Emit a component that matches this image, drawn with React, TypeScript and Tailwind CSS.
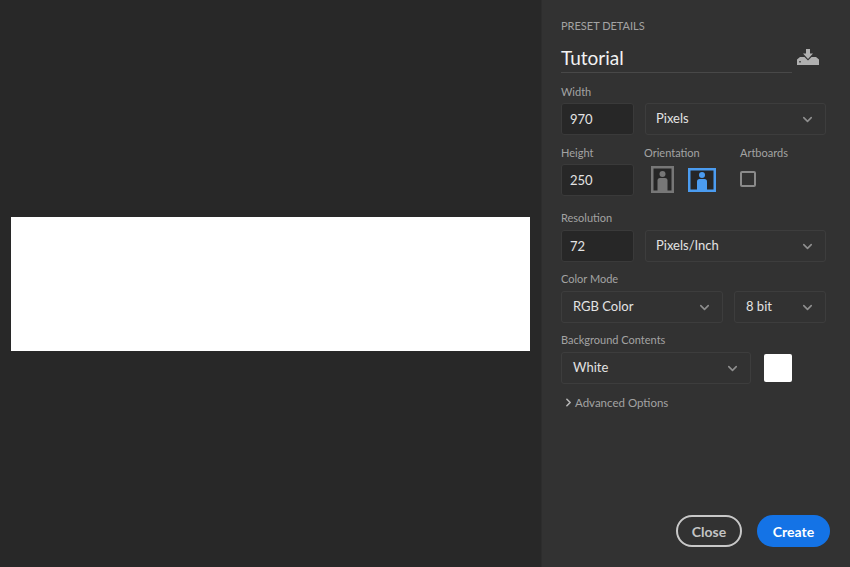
import { ChevronDown, ChevronRight } from "lucide-react"

const font = "font-['Lato','Open_Sans',sans-serif]"

const Label: React.FC<{ text: string }> = ({ text }) => (
    <div className="h-[16px] text-[11px] leading-[16px] text-[#a3a3a3] whitespace-nowrap">{text}</div>
)

const NumberBox: React.FC<{ value: string }> = ({ value }) => (
    <div className="flex items-center w-[73px] h-[32px] pl-[8px] pt-[2px] rounded-[3px] border border-[#3a3a3a] bg-[#272727] text-[13px] text-[#e3e3e3]">
        {value}
    </div>
)

const Select: React.FC<{ value: string; width: string; pad?: string }> = ({ value, width, pad = "pl-[10px]" }) => (
    <div className={`flex items-center justify-between h-[32px] ${pad} pr-[10px] rounded-[3px] border border-[#3d3d3d] text-[13px] text-[#e3e3e3] ${width}`}>
        <span>{value}</span>
        <ChevronDown size={15} strokeWidth={2.5} className="text-[#8f8f8f]" />
    </div>
)

const PersonFrame: React.FC<{ wide?: boolean }> = ({ wide }) => {
    const color = wide ? "#4b9cf0" : "#777777"
    const w = wide ? 28 : 23
    const h = wide ? 24 : 27
    const cx = w / 2
    return (
        <svg width={w} height={h} viewBox={`0 0 ${w} ${h}`}>
            <rect x="1.25" y="1.25" width={w - 2.5} height={h - 2.5} fill="#262626" stroke={color} strokeWidth="2.5" />
            <circle cx={cx} cy={wide ? 7 : 8} r="3" fill={color} />
            <path d={`M${cx - 5} ${h - 2}V${wide ? 13.5 : 14.5}q0-2.5 2.5-2.5h5q2.5 0 2.5 2.5V${h - 2}z`} fill={color} />
        </svg>
    )
}

const App: React.FC = () => {
    return (
        <div className={`flex w-[850px] h-[567px] overflow-hidden bg-[#282828] ${font}`}>
            <div className="flex flex-1 items-center justify-center">
                <div className="w-[519px] h-[134px] bg-white"></div>
            </div>
            <div className="flex flex-col w-[309px] pl-[19px] pr-[24px] pt-[18px] bg-[#323232] border-l border-[#2d2d2d]">
                <div className="h-[16px] text-[11px] leading-[16px] text-[#a3a3a3]">PRESET DETAILS</div>

                <div className="flex items-start mt-[7px] h-[32px]">
                    <div className="w-[231px] h-[32px] border-b border-[#484848] text-[19px] leading-[33px] text-[#f2f2f2]">Tutorial</div>
                    <svg width="22" height="16" viewBox="0 0 22 16" className="mt-[8px] ml-[5px]">
                        <path d="M0 16V10.5L3 8H7.5L11 11.5L14.5 8H19L22 10.5V16z" fill="#b0b0b0" />
                        <path d="M9 0H13V4.5H16L11 10L6 4.5H9z" fill="#b0b0b0" />
                        <rect x="2" y="12" width="2" height="1.5" fill="#555555" />
                    </svg>
                </div>

                <div className="mt-[11px]"><Label text="Width" /></div>
                <div className="flex gap-[11px] mt-[3px]">
                    <NumberBox value="970" />
                    <Select value="Pixels" width="w-[181px]" />
                </div>

                <div className="flex mt-[10px]">
                    <div className="w-[83px]">
                        <Label text="Height" />
                        <div className="mt-[3px]"><NumberBox value="250" /></div>
                    </div>
                    <div className="w-[96px]">
                        <Label text="Orientation" />
                        <div className="flex items-center gap-[14px] mt-[5px] ml-[7px]">
                            <PersonFrame />
                            <PersonFrame wide />
                        </div>
                    </div>
                    <div>
                        <Label text="Artboards" />
                        <div className="w-[16px] h-[16px] mt-[10px] rounded-[2px] border-2 border-[#8a8a8a]"></div>
                    </div>
                </div>

                <div className="mt-[14px]"><Label text="Resolution" /></div>
                <div className="flex gap-[11px] mt-[4px]">
                    <NumberBox value="72" />
                    <Select value="Pixels/Inch" width="w-[181px]" />
                </div>

                <div className="mt-[9px]"><Label text="Color Mode" /></div>
                <div className="flex gap-[11px] mt-[4px]">
                    <Select value="RGB Color" width="w-[162px]" pad="pl-[11px]" />
                    <Select value="8 bit" width="w-[92px]" pad="pl-[11px]" />
                </div>

                <div className="mt-[9px]"><Label text="Background Contents" /></div>
                <div className="flex items-center gap-[13px] mt-[4px]">
                    <Select value="White" width="w-[190px]" pad="pl-[11px]" />
                    <div className="w-[28px] h-[28px] rounded-[2px] bg-white"></div>
                </div>

                <div className="flex items-center mt-[10px] ml-[1px] text-[11.5px] text-[#a3a3a3]">
                    <ChevronRight size={13} strokeWidth={3} className="text-[#b5b5b5]" />
                    <span>Advanced Options</span>
                </div>

                <div className="flex justify-end gap-[15px] mt-auto mb-[20px] mr-[-4px] text-[14px] font-bold">
                    <button className="w-[66px] h-[32px] rounded-full border-2 border-[#c8c8c8] text-[#c4c4c4]">Close</button>
                    <button className="w-[73px] h-[32px] rounded-full bg-[#1473e6] text-white">Create</button>
                </div>
            </div>
        </div>
    )
}

export default App
